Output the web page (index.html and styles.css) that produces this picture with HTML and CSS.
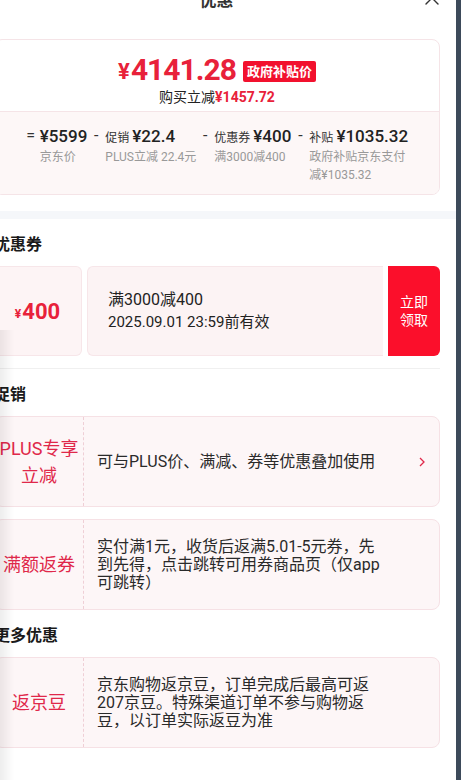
FILE: index.html
```html
<!DOCTYPE html>
<html lang="zh-CN">
<head>
    <meta charset="UTF-8">
    <meta name="viewport" content="width=device-width, initial-scale=1.0">
    <title>优惠</title>
    <link rel="stylesheet" href="styles.css">
</head>
<body>
    <div class="sheet">
        <!-- Sheet header -->
        <div class="sheet-head">
            <span></span>
            <span class="sheet-title">优惠</span>
            <button class="close-btn" aria-label="关闭">
                <svg width="14" height="14" viewBox="0 0 14 14"><path d="M1 1 L13 13 M13 1 L1 13" stroke="#333" stroke-width="1.4" fill="none" stroke-linecap="round"/></svg>
            </button>
        </div>

        <div class="sheet-body">
            <!-- Price summary -->
            <div class="summary">
                <div class="summary-top">
                    <div class="final-price">
                        <span class="yen">¥</span><span class="amount">4141.28</span>
                        <span class="price-tag">政府补贴价</span>
                    </div>
                    <div class="saved">购买立减<span>¥1457.72</span></div>
                </div>
                <div class="calc">
                    <div class="calc-item">
                        <span class="op">=</span>
                        <div class="calc-body">
                            <div class="calc-val">¥5599</div>
                            <div class="calc-sub">京东价</div>
                        </div>
                    </div>
                    <div class="calc-item">
                        <span class="op">-</span>
                        <div class="calc-body">
                            <div class="calc-val"><em>促销</em>¥22.4</div>
                            <div class="calc-sub">PLUS立减 22.4元</div>
                        </div>
                    </div>
                    <div class="calc-item">
                        <span class="op">-</span>
                        <div class="calc-body">
                            <div class="calc-val"><em>优惠券</em>¥400</div>
                            <div class="calc-sub">满3000减400</div>
                        </div>
                    </div>
                    <div class="calc-item">
                        <span class="op">-</span>
                        <div class="calc-body">
                            <div class="calc-val"><em>补贴</em>¥1035.32</div>
                            <div class="calc-sub">政府补贴京东支付减¥1035.32</div>
                        </div>
                    </div>
                </div>
            </div>

            <div class="band"></div>

            <!-- Coupons -->
            <div class="section section-line">
                <h3>优惠券</h3>
                <div class="coupon">
                    <div class="coupon-value"><span>¥</span>400</div>
                    <div class="coupon-info">
                        <div class="coupon-rule">满3000减400</div>
                        <div class="coupon-date">2025.09.01 23:59前有效</div>
                    </div>
                    <button class="coupon-btn">立即<br>领取</button>
                </div>
            </div>

            <!-- Promotions -->
            <div class="section">
                <h3>促销</h3>
                <div class="promo">
                    <div class="promo-tag">PLUS专享<br>立减</div>
                    <div class="promo-text">可与PLUS价、满减、券等优惠叠加使用</div>
                    <div class="promo-more">
                        <svg width="6" height="10" viewBox="0 0 6 10"><path d="M1 1 L5 5 L1 9" stroke="#e0284a" stroke-width="1.3" fill="none"/></svg>
                    </div>
                </div>
                <div class="promo">
                    <div class="promo-tag">满额返券</div>
                    <div class="promo-text">实付满1元，收货后返满5.01-5元券，先到先得，点击跳转可用券商品页（仅app可跳转）</div>
                    <div class="promo-more"></div>
                </div>
            </div>

            <!-- More -->
            <div class="section">
                <h3>更多优惠</h3>
                <div class="promo">
                    <div class="promo-tag">返京豆</div>
                    <div class="promo-text">京东购物返京豆，订单完成后最高可返207京豆。特殊渠道订单不参与购物返豆，以订单实际返豆为准</div>
                    <div class="promo-more"></div>
                </div>
            </div>
        </div>
    </div>
    <div class="edge-shade"></div>
</body>
</html>
```

FILE: styles.css
```css
html, body {
    height: 100%;
}

body {
    margin: 0;
    background-color: #3d4a5a; /* page behind the sheet */
    font-family: Roboto, "Noto Sans CJK SC", sans-serif;
    color: #333;
    display: flex;
    overflow: hidden;
}

.sheet {
    width: 478px;
    margin-left: -22px;
    background-color: #fff;
    flex-shrink: 0;
}

/* Header */
.sheet-head {
    height: 40px;
    margin-top: -22px;
    display: grid;
    grid-template-columns: 1fr auto 1fr;
    align-items: center;
    padding: 0 17px 0 16px;
}

.sheet-title {
    font-size: 17px;
    font-weight: bold;
    color: #333;
}

.close-btn {
    justify-self: end;
    background: none;
    border: none;
    padding: 0;
    width: 14px;
    height: 14px;
    display: flex;
}

.sheet-body {
    padding: 0 16px;
}

/* Summary card */
.summary {
    margin-top: 21px;
    border: 1px solid #f5e4e7;
    border-radius: 8px;
    overflow: hidden;
}

.summary-top {
    padding: 10px 0 5px;
    text-align: center;
}

.final-price {
    height: 38px;
    display: flex;
    justify-content: center;
    align-items: center;
    color: #e8213a;
    font-weight: bold;
}

.final-price .yen {
    font-size: 22px;
    margin-top: 5px;
    margin-right: 1px;
}

.final-price .amount {
    font-size: 30px;
    letter-spacing: -1px;
}

.price-tag {
    margin-left: 7px;
    margin-top: 5px;
    background-color: #f2112e;
    color: #fff;
    font-size: 13px;
    line-height: 21px;
    padding: 0 4px;
    border-radius: 2px;
}

.saved {
    height: 18px;
    font-size: 14px;
    line-height: 18px;
    color: #222;
}

.saved span {
    color: #e8213a;
    font-weight: bold;
}

.calc {
    background-color: #fdf7f7;
    border-top: 1px solid #f5e4e7;
    padding: 12px 0 10px;
    display: flex;
    justify-content: center;
    gap: 3px;
}

.calc-item {
    display: flex;
    align-items: flex-start;
}

.op {
    width: 12px;
    height: 24px;
    flex-shrink: 0;
    margin-right: 3px;
    text-align: center;
    font-size: 16px;
    line-height: 24px;
    color: #333;
}

.calc-body {
    max-width: 100px;
}

.calc-val {
    height: 24px;
    display: flex;
    align-items: baseline;
    font-size: 17px;
    font-weight: 500;
    line-height: 24px;
    color: #222;
    white-space: nowrap;
}

.calc-val em {
    font-style: normal;
    font-weight: normal;
    font-size: 12px;
    color: #333;
    margin-right: 3px;
}

.calc-sub {
    font-size: 12px;
    line-height: 18px;
    color: #999;
}

.band {
    height: 8px;
    margin: 16px -16px 0;
    background-color: #f5f7fa;
}

/* Sections */
.section h3 {
    margin: 15px 0 10px;
    height: 22px;
    font-size: 16px;
    line-height: 22px;
    color: #1a1a1a;
}

.section-line {
    padding-bottom: 12px;
    border-bottom: 1px solid #f0f0f0;
}

/* Coupon */
.coupon {
    height: 90px;
    display: flex;
    gap: 5px;
}

.coupon-value {
    width: 88px;
    background-color: #fdf4f5;
    border: 1px solid #f7e6e9;
    border-left: none;
    border-radius: 6px;
    box-sizing: border-box;
    display: flex;
    justify-content: center;
    align-items: center;
    color: #e8213a;
    font-size: 22px;
    font-weight: bold;
}

.coupon-value span {
    font-size: 12px;
    margin-top: 5px;
    margin-right: 1px;
}

.coupon-info {
    flex: 1;
    background-color: #fcf3f4;
    border: 1px solid #f7e6e9;
    border-right: none;
    border-radius: 6px 0 0 6px;
    padding-left: 20px;
    display: flex;
    flex-direction: column;
    justify-content: center;
}

.coupon-rule {
    font-size: 16px;
    line-height: 22px;
    color: #222;
}

.coupon-date {
    font-size: 15px;
    line-height: 22px;
    color: #222;
}

.coupon-btn {
    width: 52px;
    border: none;
    border-radius: 0 6px 6px 0;
    background-color: #fb0f2b;
    color: #fff;
    font-family: inherit;
    font-size: 14px;
    line-height: 18px;
    padding: 0;
}

/* Promo cards */
.promo {
    min-height: 89px;
    margin-bottom: 12px;
    display: flex;
    border: 1px solid #f6e1e5;
    border-radius: 8px;
    background-color: #fdf6f7;
}

.promo-tag {
    width: 88px;
    flex-shrink: 0;
    border-right: 1px dashed #efcfd6;
    display: flex;
    justify-content: center;
    align-items: center;
    text-align: center;
    font-size: 18px;
    line-height: 27px;
    color: #e0284a;
}

.promo-text {
    flex: 1;
    padding-left: 13px;
    display: flex;
    align-items: center;
    font-size: 16px;
    line-height: 18px;
    color: #2a2a2a;
}

.promo-more {
    width: 53px;
    flex-shrink: 0;
    padding-right: 14px;
    box-sizing: border-box;
    display: flex;
    justify-content: flex-end;
    align-items: center;
}

/* soft shadow on the left edge */
.edge-shade {
    position: fixed;
    left: 0;
    top: 330px;
    bottom: 0;
    width: 14px;
    background: linear-gradient(to right, rgba(0, 0, 0, 0.07), rgba(0, 0, 0, 0));
    pointer-events: none;
}
```
